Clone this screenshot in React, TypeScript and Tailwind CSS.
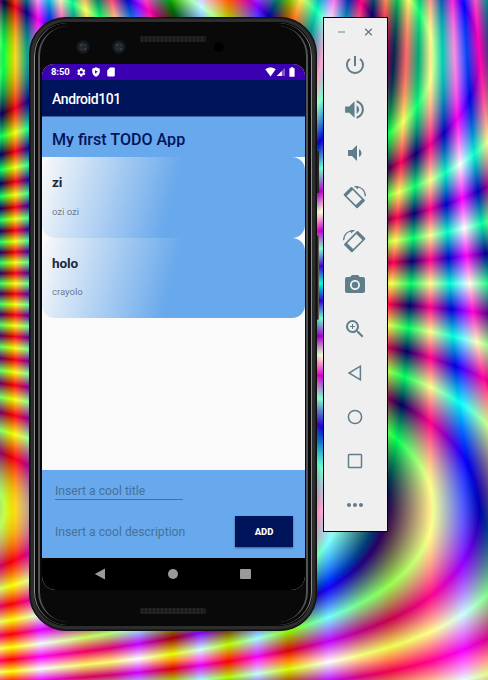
import React, { useLayoutEffect, useRef } from "react";
import {
  MdCameraAlt,
  MdMoreHoriz,
  MdPowerSettingsNew,
  MdSettings,
  MdVolumeDown,
  MdVolumeUp,
  MdZoomIn,
} from "react-icons/md";

const WIDTH = 488;
const HEIGHT = 680;

// Blue intensity along the x axis of the wallpaper: [x, level].
const BLUE_STOPS: [number, number][] = [
  [0, 0.4], [11, 0], [40, 1], [85, 0.38], [110, 0.45], [138, 1], [172, 0], [200, 1],
  [228, 0], [257, 1], [288, 0], [328, 1], [360, 0.5], [390, 0.3], [430, 0.55], [463, 1], [494, 0.4],
];

function blueAt(x: number): number {
  for (let i = 1; i < BLUE_STOPS.length; i++) {
    const [x1, v1] = BLUE_STOPS[i];
    if (x <= x1) {
      const [x0, v0] = BLUE_STOPS[i - 1];
      return v0 + ((v1 - v0) * (x - x0)) / (x1 - x0);
    }
  }
  return 0.4;
}

// Triangle wave with peaks of 1 at multiples of 2π.
function triangle(phase: number): number {
  const t = Math.abs(phase / (2 * Math.PI)) % 1;
  return Math.abs(1 - 2 * t);
}

function Wallpaper() {
  const ref = useRef<HTMLCanvasElement>(null);
  useLayoutEffect(() => {
    const ctx = ref.current?.getContext("2d");
    if (!ctx) return;
    const image = ctx.createImageData(WIDTH, HEIGHT);
    for (let y = 0; y < HEIGHT; y++) {
      const redCycles = 6 - 0.0091 * y;
      const wave = Math.sin(((y - 283) / 226) * (Math.PI / 2));
      for (let x = 0; x < WIDTH; x++) {
        const amplitude = 44.2 - 0.049 * x - 0.000022 * x * x;
        const redPhase = 2 * Math.PI * redCycles * Math.sin(((x - 15) / 415) * Math.PI);
        const i = (y * WIDTH + x) * 4;
        image.data[i] = 255 * triangle(redPhase);
        image.data[i + 1] = 255 * triangle(amplitude * wave);
        image.data[i + 2] = 255 * blueAt(x);
        image.data[i + 3] = 255;
      }
    }
    ctx.putImageData(image, 0, 0);
  }, []);
  return <canvas ref={ref} width={WIDTH} height={HEIGHT} className="absolute inset-0 h-[680px] w-[488px]" />;
}

function RotateIcon({ mirrored = false }: { mirrored?: boolean }) {
  return (
    <svg viewBox="0 0 24 24" className={mirrored ? "size-6 -scale-x-100" : "mr-px size-6"} fill="currentColor">
      <path
        transform="translate(12.3 12.6) rotate(45)"
        fillRule="evenodd"
        d="M-8.8-5.8H8.8a1 1 0 0 1 1 1V4.8a1 1 0 0 1-1 1H-8.8a1 1 0 0 1-1-1V-4.8a1 1 0 0 1 1-1ZM-6.6-4.2V4.2H6.4V-4.2Z"
      />
      <path d="M12.6 1.6C18.6 1 23.2 5.2 23.4 11.2" fill="none" stroke="currentColor" strokeWidth="1.2" />
      <path d="M12.4 1 16.6 1.6 15.8 4.4Z" />
    </svg>
  );
}

function Toolbar() {
  return (
    <aside className="ml-[6px] flex h-[515px] w-[65px] flex-col items-center border border-black bg-[#efefef] pr-[2px] text-[#607d8b]">
      <div className="flex h-[25px] w-full items-center justify-center gap-[18px] pl-px pt-[3px]">
        <svg viewBox="0 0 9 9" className="size-[9px]" stroke="#94a7b0" strokeWidth="1.5"><path d="M1 4H8" /></svg>
        <svg viewBox="0 0 9 9" className="size-[9px]" stroke="currentColor" strokeWidth="1.3"><path d="M1.2 .7 7.8 7.3M7.8 .7 1.2 7.3" /></svg>
      </div>
      <ToolButton><MdPowerSettingsNew size={24} /></ToolButton>
      <ToolButton><MdVolumeUp size={25} /></ToolButton>
      <ToolButton><MdVolumeDown size={24} /></ToolButton>
      <ToolButton><RotateIcon /></ToolButton>
      <ToolButton><RotateIcon mirrored /></ToolButton>
      <ToolButton><MdCameraAlt size={24} /></ToolButton>
      <ToolButton><MdZoomIn size={24} /></ToolButton>
      <ToolButton>
        <svg viewBox="0 0 16 16" className="size-4" fill="none" stroke="currentColor" strokeWidth="1.5"><path d="M13.4 1.2V14.8L2 8Z" /></svg>
      </ToolButton>
      <ToolButton>
        <svg viewBox="0 0 16 16" className="size-4" fill="none" stroke="currentColor" strokeWidth="1.5"><circle cx="8" cy="8" r="6.6" /></svg>
      </ToolButton>
      <ToolButton>
        <svg viewBox="0 0 16 16" className="size-4" fill="none" stroke="currentColor" strokeWidth="1.5"><rect x="1.5" y="1.5" width="13" height="13" rx="0.8" /></svg>
      </ToolButton>
      <ToolButton><MdMoreHoriz size={24} /></ToolButton>
    </aside>
  );
}

function ToolButton({ children }: { children: React.ReactNode }) {
  return <button className="flex h-[44px] w-full shrink-0 items-center justify-center">{children}</button>;
}

function StatusBar() {
  return (
    <div className="flex h-[16px] shrink-0 items-center bg-[#3a00b2] pl-[9px] pr-[9px] text-white">
      <span className="w-[25px] text-[9.5px] font-bold leading-none tracking-[-0.1px]">8:50</span>
      <MdSettings size={10.5} />
      <svg viewBox="0 0 10 10" className="ml-[4.5px] size-[10px]">
        <path d="M5 .3 8.8 1.7V4.6C8.8 7 7.2 9 5 9.8 2.8 9 1.2 7 1.2 4.6V1.7Z" fill="#fff" />
        <path d="M4 3.2 6.8 4.8 4 6.4Z" fill="#3a00b2" />
      </svg>
      <svg viewBox="0 0 10 10" className="ml-[5px] size-[10px]" fill="#fff">
        <path d="M4 .6H8a.8.8 0 0 1 .8.8V8.6a.8.8 0 0 1-.8.8H2a.8.8 0 0 1-.8-.8V3.4Z" />
      </svg>
      <svg viewBox="0 0 11 10" className="ml-auto h-[10px] w-[11px]" fill="#fff">
        <path d="M.3 2.2C3.3 0 7.7 0 10.7 2.2L5.5 9.4Z" />
      </svg>
      <svg viewBox="0 0 10 10" className="size-[10px]" fill="#fff">
        <path d="M9 .8V9H.8Z" opacity=".35" />
        <path d="M5.8 4V9H.8Z" />
      </svg>
      <svg viewBox="0 0 6 10" className="ml-[3px] mr-px h-[10px] w-[6px]" fill="#fff">
        <path d="M1.8.3H4.2V1.2H5.6V9.8H.4V1.2H1.8Z" />
      </svg>
    </div>
  );
}

function TodoCard({ title, description }: { title: string; description: string }) {
  return (
    <article className="flex h-[80.5px] shrink-0 flex-col rounded-[13px] bg-[linear-gradient(104deg,#fafafa_0%,#68a8ec_50%)] pl-[10px] pt-[17px]">
      <h2 className="text-[13.6px] font-bold leading-[16px] tracking-[-0.1px] text-[#1c2a36]">{title}</h2>
      <p className="mt-[14.5px] text-[9.6px] leading-[14px] tracking-[-0.05px] text-[#1c2a36]/60">{description}</p>
    </article>
  );
}

function Screen() {
  return (
    <main className="flex h-[526px] w-[263px] flex-col overflow-hidden rounded-t-[12px] rounded-b-[14px] bg-[#fafafa]">
      <StatusBar />
      <header className="flex h-[37px] shrink-0 items-center border-b border-[#3a66a6] bg-[#00145c] pl-[10px] pt-[2px] text-[14px] font-medium tracking-[-0.4px] text-white">
        Android101
      </header>
      <div className="h-[40px] shrink-0 bg-[#68a8ec] pl-[10px] pt-[12px]">
        <h1 className="h-[18px] overflow-hidden text-[16.1px] font-medium leading-[21px] text-[#00145c]">My first TODO App</h1>
      </div>
      <section className="flex flex-1 flex-col">
        <TodoCard title="zi" description="ozi ozi" />
        <TodoCard title="holo" description="crayolo" />
      </section>
      <form className="flex h-[88px] shrink-0 flex-col bg-[#68a8ec] pl-[13px] pr-[12px] text-[12.15px] text-[#457298]">
        <div className="mt-[12px] flex h-[18px] w-[128px] items-center border-b border-[#457298] pt-[2px]">Insert a cool title</div>
        <div className="mt-[16px] flex h-[31px] items-center justify-between">
          <span className="pt-[2px]">Insert a cool description</span>
          <button type="button" className="h-[31px] w-[58px] bg-[#00145c] pt-px text-[9.5px] font-extrabold text-white shadow-[0_1px_2px_rgba(0,0,0,0.45)]">ADD</button>
        </div>
      </form>
      <nav className="flex h-[32px] shrink-0 items-center bg-black pl-[52px] text-[#9a9a9a]">
        <svg viewBox="0 0 12 12" className="size-[12px]" fill="currentColor"><path d="M11 .5V11.5L.8 6Z" /></svg>
        <span className="ml-[62px] size-[10px] rounded-full bg-current" />
        <span className="ml-[62px] size-[10.5px] rounded-[1px] bg-current" />
      </nav>
    </main>
  );
}

function Lens() {
  return (
    <svg viewBox="0 0 14 14" className="size-[14px]">
      <circle cx="7" cy="7" r="6.7" fill="#15191d" />
      <circle cx="7" cy="7" r="4.6" fill="#22272b" />
      <path d="M4.4 5.8 6 4.2M8.4 9.6 9.8 8.2M5 9 5.6 9.4M8.6 5 9.2 5.6" stroke="#4a5056" strokeWidth="1.2" />
    </svg>
  );
}

function SpeakerGrille() {
  return (
    <div className="h-[6px] w-[66px] rounded-[2px] bg-[#1a1a1a] bg-[radial-gradient(circle,#292929_0.8px,transparent_1.3px)] bg-[size:4px_3px]" />
  );
}

function Phone() {
  return (
    <div className="relative h-[614px] w-[288px]">
      <span className="absolute left-[286px] top-[134px] h-[42px] w-[4px] rounded-r-[1px] bg-[#242424]" />
      <span className="absolute left-[286px] top-[218px] h-[85px] w-[4px] rounded-r-[1px] border border-[#5c5c54] bg-[#242424]" />
      <div className="relative flex h-full flex-col items-center rounded-[37px] border border-[#101010] bg-[#090909] shadow-[inset_0_0_0_1px_#1c1c1c,inset_0_0_0_4px_#2d2d2d,inset_0_0_0_5px_#080808]">
        <span className="absolute inset-x-[4px] inset-y-[5px] rounded-[33px] border-x border-[#8c8c8c]" />
        <span className="absolute inset-x-[8px] inset-y-[8px] rounded-[30px] border-x-2 border-[#515255]" />
        <div className="relative flex h-[46px] w-full shrink-0">
          <div className="ml-[46px] mt-[22px] flex h-[14px] gap-[22px]">
            <Lens />
            <Lens />
          </div>
          <div className="ml-[14px] mt-[18px]"><SpeakerGrille /></div>
          <span className="ml-[8px] mt-[24px] size-[10px] rounded-full bg-black" />
        </div>
        <div className="relative w-full pl-[12px]"><Screen /></div>
        <div className="mt-[18px]"><SpeakerGrille /></div>
      </div>
    </div>
  );
}

export default function App() {
  return (
    <div className="relative h-[680px] w-[488px] overflow-hidden font-['Roboto',sans-serif]">
      <Wallpaper />
      <div className="relative flex items-start pl-[29px] pt-[17px]">
        <Phone />
        <Toolbar />
      </div>
    </div>
  );
}
